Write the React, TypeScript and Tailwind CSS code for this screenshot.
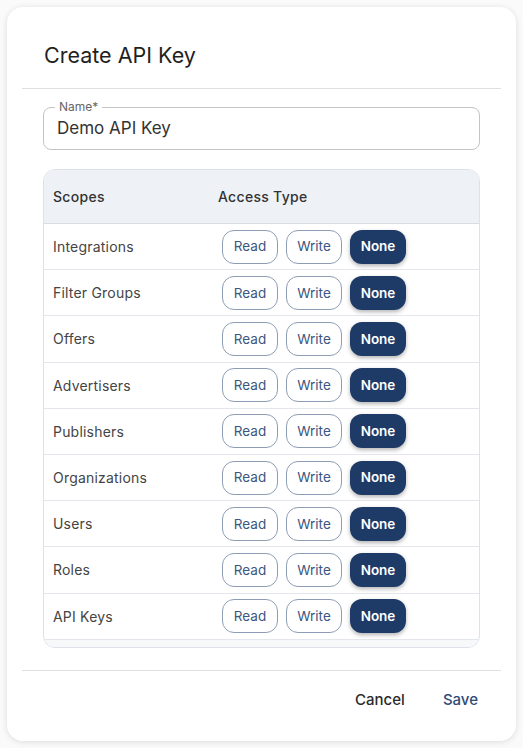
import React from 'react';

const scopes = [
  'Integrations',
  'Filter Groups',
  'Offers',
  'Advertisers',
  'Publishers',
  'Organizations',
  'Users',
  'Roles',
  'API Keys',
];

function AccessButtons() {
  return (
    <div className="flex items-center gap-[8px]">
      <button className="w-[56px] h-[34px] rounded-[12px] border border-[#8e9db5] text-[13.5px] text-[#3b5680]">
        Read
      </button>
      <button className="w-[56px] h-[34px] rounded-[12px] border border-[#8e9db5] text-[13.5px] text-[#3b5680]">
        Write
      </button>
      <button className="w-[56px] h-[34px] rounded-[12px] bg-[#1e3a66] text-[13.5px] font-semibold text-white shadow-[0_2px_4px_rgba(0,0,0,0.3)]">
        None
      </button>
    </div>
  );
}

export default function App() {
  return (
    <div className="min-h-screen bg-[#fafafa] pt-[7px] pl-[7px]" style={{ fontFamily: 'Inter, "Noto Sans", sans-serif' }}>
      <div className="w-[509px] h-[734px] bg-white rounded-2xl shadow-[0_1px_6px_rgba(0,0,0,0.12)] flex flex-col">
        <div className="px-[37px] pt-[34px] pb-[19px]">
          <h1 className="text-[21.5px] leading-[28px] font-normal text-[#1f1f1f]">Create API Key</h1>
        </div>
        <div className="mx-[15px] border-t border-[#e0e0e0]" />

        <div className="px-[36px] pt-[18px]">
          <div className="relative h-[43px] rounded-lg border border-[#c4c4c4] flex items-center px-[13px]">
            <span className="absolute -top-[9px] left-[11px] bg-white px-[4px] text-[12px] leading-[16px] text-[#666]">
              Name*
            </span>
            <span className="text-[17px] text-[#333]">Demo API Key</span>
          </div>

          <div className="mt-[19px] h-[479px] rounded-xl border border-[#dde2ea] overflow-hidden flex flex-col">
            <div className="h-[54px] shrink-0 bg-[#eef2f7] border-b border-[#d8dde5] flex items-center text-[14px] font-medium text-[#333] tracking-[0.3px]">
              <div className="w-[165px] pl-[9px]">Scopes</div>
              <div className="pl-[9px]">Access Type</div>
            </div>
            {scopes.map((s) => (
              <div key={s} className="h-[46.2px] shrink-0 border-b border-[#e3e6eb] flex items-center">
                <div className="w-[165px] pl-[9px] text-[14px] text-[#444] tracking-[0.2px]">{s}</div>
                <div className="pl-[13px]">
                  <AccessButtons />
                </div>
              </div>
            ))}
            <div className="flex-1 bg-[#f7f8fa]" />
          </div>
        </div>

        <div className="mx-[15px] mt-[22px] border-t border-[#e0e0e0]" />
        <div className="flex justify-end items-center gap-[38px] px-[38px] pt-[18px]">
          <button className="text-[15px] font-medium text-[#2a2a2a]">Cancel</button>
          <button className="text-[15px] font-medium text-[#2e4a78]">Save</button>
        </div>
      </div>
    </div>
  );
}
